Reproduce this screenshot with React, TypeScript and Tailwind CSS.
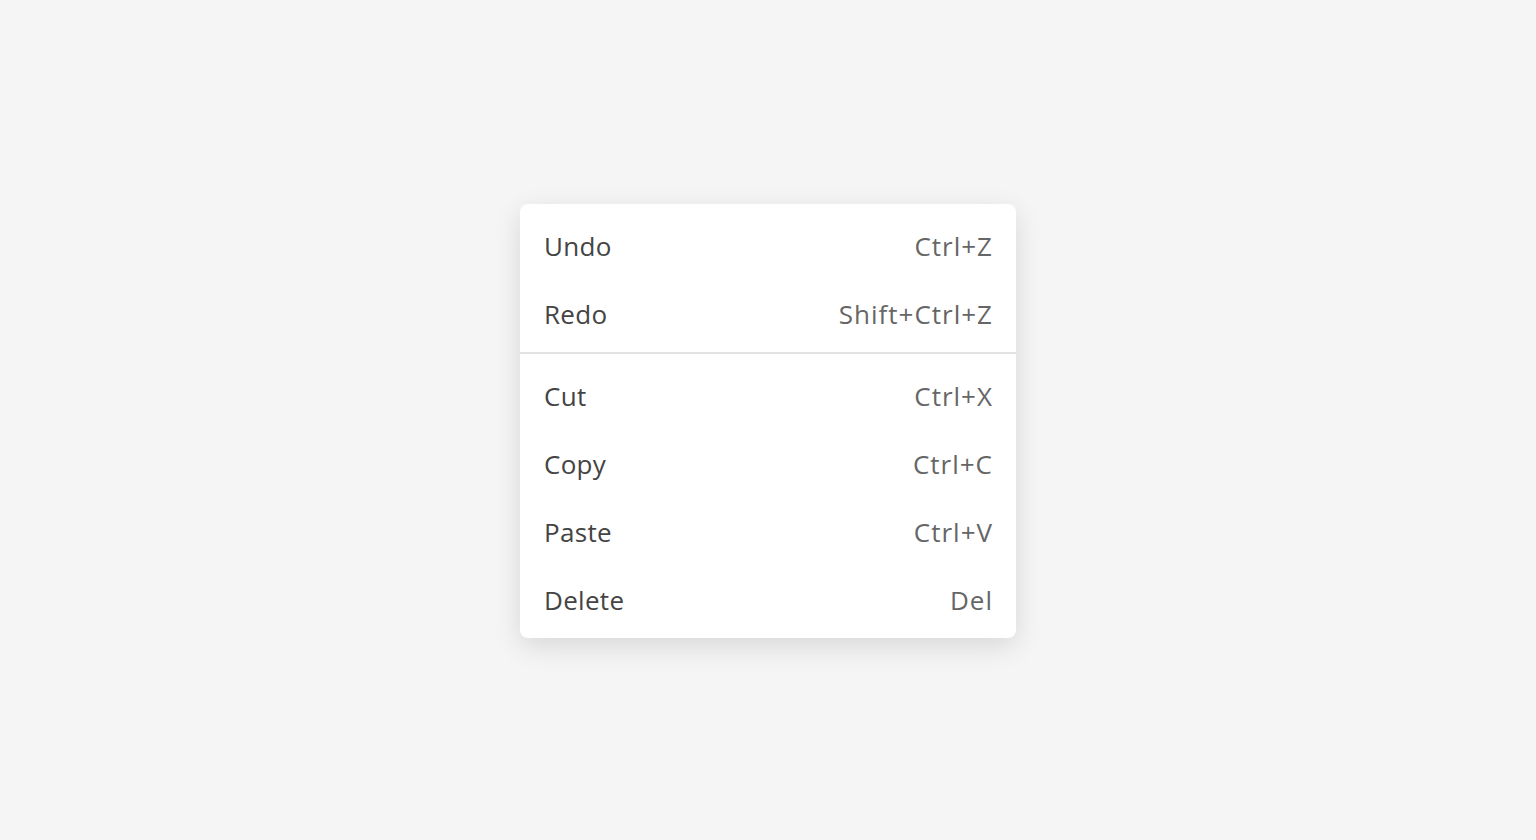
import React from "react";

interface MenuItem {
  label: string;
  shortcut: string;
}

const groups: MenuItem[][] = [
  [
    { label: "Undo", shortcut: "Ctrl+Z" },
    { label: "Redo", shortcut: "Shift+Ctrl+Z" },
  ],
  [
    { label: "Cut", shortcut: "Ctrl+X" },
    { label: "Copy", shortcut: "Ctrl+C" },
    { label: "Paste", shortcut: "Ctrl+V" },
    { label: "Delete", shortcut: "Del" },
  ],
];

export default function App() {
  return (
    <div
      className="min-h-screen w-full bg-[#f5f5f5] flex justify-center pt-[204px]"
      style={{ fontFamily: '"Open Sans", "Noto Sans", sans-serif' }}
    >
      <div className="w-[496px] h-fit bg-white rounded-lg pt-2 pb-1 shadow-[0_8px_28px_rgba(0,0,0,0.12)]">
        {groups.map((group, gi) => (
          <div key={gi}>
            {gi > 0 && <div className="h-[2px] bg-[#e2e2e2] mt-1 mb-2" />}
            {group.map((item) => (
              <div
                key={item.label}
                className="h-[68px] px-6 flex items-center justify-between text-[26px]"
              >
                <span className="text-[#444444] tracking-[0.3px]">{item.label}</span>
                <span className="text-[#666666] tracking-[1px] -mr-[1px]">{item.shortcut}</span>
              </div>
            ))}
          </div>
        ))}
      </div>
    </div>
  );
}
